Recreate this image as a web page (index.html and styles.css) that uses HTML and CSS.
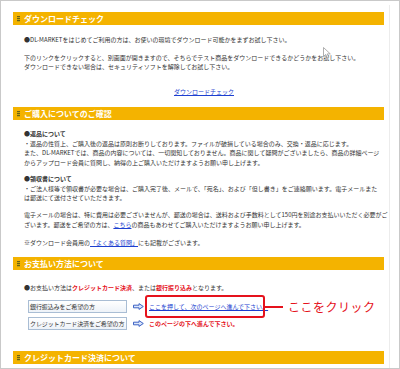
FILE: index.html
```html
<!DOCTYPE html>
<html lang="ja">
<head>
<meta charset="utf-8">
<title>ダウンロードチェック</title>
<link rel="stylesheet" href="styles.css">
</head>
<body>
<div class="frame">
  <div class="panel">
    <section class="sec">
      <h2 class="hd"><span class="hd-icon"></span>ダウンロードチェック</h2>
      <div class="body">
        <p class="p s1a">●DL-MARKETをはじめてご利用の方は、お使いの環境でダウンロード可能かをまずお試し下さい。</p>
        <p class="p s1b">下のリンクをクリックすると、別画面が開きますので、そちらでテスト商品をダウンロードできるかどうかをお試し下さい。<br>ダウンロードできない場合は、セキュリティソフトを解除してお試し下さい。</p>
        <p class="p center s1c"><a class="link" href="#">ダウンロードチェック</a></p>
      </div>
    </section>

    <section class="sec sec2">
      <h2 class="hd"><span class="hd-icon"></span>ご購入についてのご確認</h2>
      <div class="body">
        <p class="p bold s2a">●返品について</p>
        <p class="p">・返品の性質上、ご購入後の返品は原則お断りしております。ファイルが破損している場合のみ、交換・返品に応じます。<br>また、DL-MARKETでは、商品の内容については、一切関知しておりません。商品に関して疑問がございましたら、商品の詳細ページ<br>からアップロード会員に質問し、納得の上ご購入いただけますようお願い申し上げます。</p>
        <p class="p bold s2b">●領収書について</p>
        <p class="p">・ご法人様等で領収書が必要な場合は、ご購入完了後、メールで、「宛名」、および「但し書き」をご連絡願います。電子メールまた<br>は郵送にて送付させていただきます。</p>
        <p class="p s2c">電子メールの場合は、特に費用は必要ございませんが、郵送の場合は、送料および手数料として150円を別途お支払いいただく必要がご<br>ざいます。郵送をご希望の方は、<a class="link" href="#">こちら</a>の商品もあわせてご購入いただけますようお願い申し上げます。</p>
        <p class="p s2d">※ダウンロード会員用の<a class="link" href="#">「よくある質問」</a>にも記載がございます。</p>
      </div>
    </section>

    <section class="sec sec3">
      <h2 class="hd"><span class="hd-icon"></span>お支払い方法について</h2>
      <div class="body">
        <p class="p s3a">●お支払い方法は<span class="red">クレジットカード決済</span>、または<span class="red">銀行振り込み</span>となります。</p>
        <div class="rows">
          <div class="row">
            <div class="label">銀行振込みをご希望の方</div>
            <svg class="arrow" width="11" height="7" viewBox="0 0 11 7"><path d="M0.5 2.2 H6 V0.6 L10.3 3.5 L6 6.4 V4.8 H0.5 Z" fill="#dbe6fb" stroke="#3d63c4" stroke-width="1"/></svg>
            <a class="link" href="#">ここを押して、次のページへ進んで下さい。</a>
          </div>
          <div class="row">
            <div class="label">クレジットカード決済をご希望の方</div>
            <svg class="arrow" width="11" height="7" viewBox="0 0 11 7"><path d="M0.5 2.2 H6 V0.6 L10.3 3.5 L6 6.4 V4.8 H0.5 Z" fill="#dbe6fb" stroke="#3d63c4" stroke-width="1"/></svg>
            <span class="red">このページの下へ進んで下さい。</span>
          </div>
          <div class="note">
            <div class="note-box"></div>
            <div class="note-line"></div>
            <span class="note-text">ここをクリック</span>
          </div>
        </div>
      </div>
    </section>

    <section class="sec sec4">
      <h2 class="hd"><span class="hd-icon"></span>クレジットカード決済について</h2>
    </section>
  </div>
  <svg class="cursor" width="8" height="12" viewBox="0 0 8 12"><path d="M0.5 0.5 V9.5 L2.8 7.4 L4.4 11 L5.8 10.4 L4.3 6.9 H7.3 Z" fill="#fff" stroke="#9a9a9a" stroke-width="0.8"/></svg>
</div>
</body>
</html>
```

FILE: styles.css
```css
html, body {
  margin: 0;
  padding: 0;
  background: #fff;
}

body {
  font-family: "Noto Sans CJK JP", "Noto Sans", sans-serif;
}

.frame {
  position: relative;
  width: 400px;
  height: 369px;
  box-sizing: border-box;
  border: 1px solid #c9c9c9;
  overflow: hidden;
  background: #fff;
}

.panel {
  margin-top: 4px;
  width: 389px;
  height: 363px;
  box-sizing: border-box;
  border-right: 1px solid #ececec;
  padding: 7px 5px 0 12px;
}

.hd {
  display: flex;
  align-items: center;
  gap: 4px;
  height: 13px;
  margin: 0;
  padding-left: 4px;
  background: #f4b300;
  color: #fff;
  font-size: 8px;
  font-weight: bold;
  line-height: 13px;
  white-space: nowrap;
}

.hd-icon {
  width: 3px;
  height: 6px;
  flex: none;
  background: repeating-linear-gradient(to bottom, #6d6215 0 1px, #c9a60a 1px 2px);
}

.body {
  padding-left: 11px;
  font-size: 6px;
  line-height: 9.5px;
  color: #333;
  white-space: nowrap;
}

.p {
  margin: 0;
}

.bold {
  font-weight: bold;
}

.center {
  text-align: center;
}

.link {
  color: #1d3fd0;
  text-decoration: underline;
}

.red {
  color: #e5121c;
  font-weight: bold;
}

.s1a { margin-top: 10px; }
.s1b { margin-top: 8px; }
.s1c { margin-top: 15px; }

.sec2 { margin-top: 11px; }
.s2a { margin-top: 9px; }
.s2b { margin-top: 7px; }
.s2c { margin-top: 7.5px; }
.s2d { margin-top: 9px; }

.sec3 { margin-top: 9.5px; }
.s3a { margin-top: 13px; }

.rows {
  position: relative;
  margin: 7.5px 0 0 4px;
  display: flex;
  flex-direction: column;
  gap: 4px;
}

.row {
  display: flex;
  align-items: center;
  height: 13px;
}

.label {
  width: 99px;
  height: 13px;
  box-sizing: border-box;
  border: 1px solid #a9bdd4;
  background: linear-gradient(to bottom, #ffffff, #edf2f8);
  padding-left: 1px;
  line-height: 11px;
  color: #333;
  letter-spacing: -0.1px;
  flex: none;
}

.arrow {
  margin: 0 5px 0 6px;
  flex: none;
}

.note {
  position: absolute;
  left: 117px;
  top: -5px;
  display: flex;
  align-items: center;
}

.note-box {
  width: 120px;
  height: 23px;
  box-sizing: border-box;
  border: 2px solid #e5121c;
  border-radius: 3px;
}

.note-line {
  width: 18px;
  height: 2px;
  background: #e5121c;
}

.note-text {
  margin-left: 5px;
  font-size: 12px;
  line-height: 14px;
  letter-spacing: 0.5px;
  color: #e5121c;
}

.sec4 { margin-top: 21px; }

.cursor {
  position: absolute;
  left: 322px;
  top: 46px;
}
```
